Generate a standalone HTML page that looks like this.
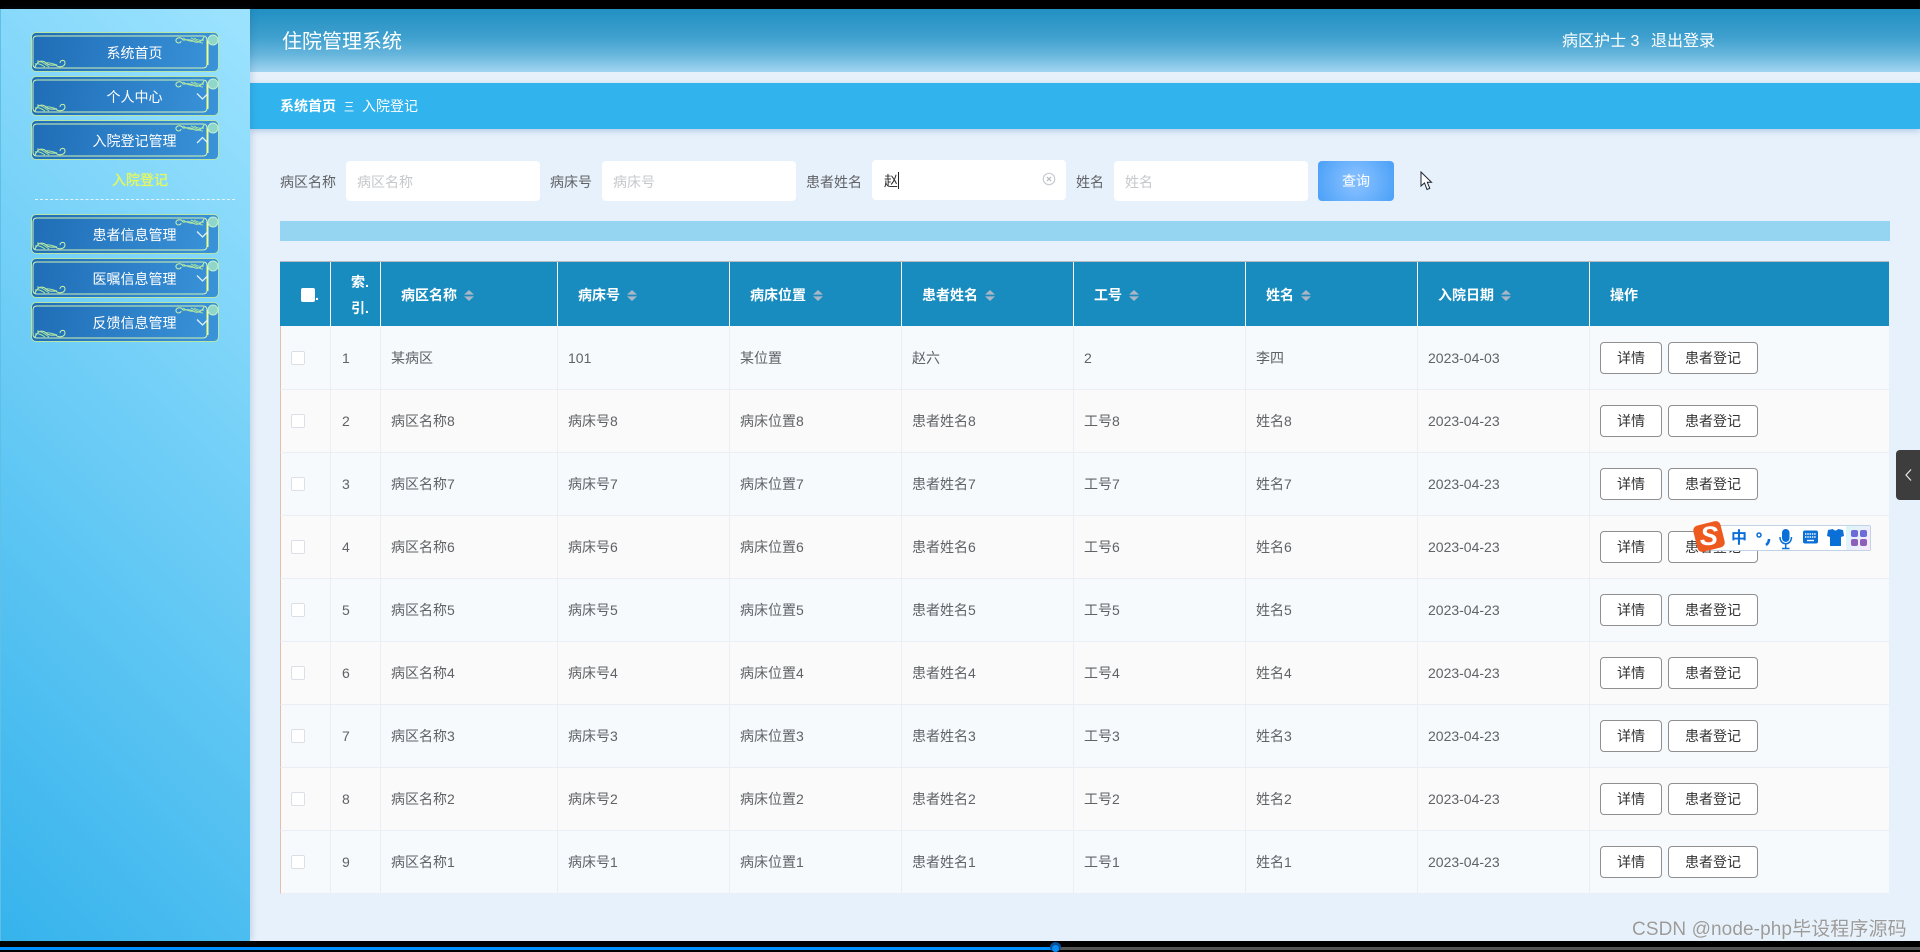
<!DOCTYPE html>
<html lang="zh-CN"><head><meta charset="utf-8"><title>住院管理系统</title>
<style>
*{box-sizing:border-box;margin:0;padding:0}
html,body{width:1920px;height:950px;overflow:hidden;background:#000;font-family:"Liberation Sans","Noto Sans CJK SC",sans-serif;font-size:14px}
.a{position:absolute}
#main{left:250px;top:9px;width:1670px;height:932px;background:#e7f1fb}
#side{left:0;top:9px;width:250px;height:932px;background:linear-gradient(225deg,#9de3ff,#36b3ec);box-shadow:2px 0 6px rgba(40,80,130,.18);border-left:1px solid #5fbfe6}
.nb{position:absolute;left:31px;width:188px;height:40px;border:1px solid #b5e6a8;border-radius:5px;background:linear-gradient(100deg,#1f6db6,#3a93d9)}
.nb svg{position:absolute;left:-1px;top:-1px}
.nb span{position:absolute;left:-1px;width:207px;text-align:center;top:10px;line-height:20px;color:#fff;font-size:14px}
#hd{left:250px;top:9px;width:1670px;height:63px;background:linear-gradient(#2190c3 0,#3fa0ce 45%,#66b5dc 72%,#a2d5f0 100%)}
#crumb{left:250px;top:83px;width:1670px;height:46px;background:#31b3ed;box-shadow:0 2px 6px rgba(60,110,180,.3)}
.lb{position:absolute;top:172px;line-height:20px;color:#606266}
.ip{position:absolute;width:194px;height:40px;background:#fff;border-radius:4px;padding-left:11px;padding-top:1px;line-height:40px;color:#c6c8cc}
#tw{left:280px;top:261px;width:1609px}
table{border-collapse:separate;border-spacing:0;table-layout:fixed;width:1609px;border-top:1px solid #b8bcc2}
th{height:64px;background:#188cbf;color:#fff;text-align:left;font-weight:700;padding:1px 0 0 20px;border-left:1px solid #fff;font-size:14px;line-height:26px;vertical-align:middle}
th:first-child{border-left:0;padding-left:21px}
td{height:63px;padding:0 0 0 10px;color:#606266;border-left:1px solid #ebeef5;border-bottom:1px solid #ebeef5;font-size:14px;vertical-align:middle}
tbody tr:first-child td{height:64px;padding-top:1px}
td:first-child{border-left:1px solid #e9bcae}
tr.o td{background:#f6fafd}
tr.e td{background:#fafafa}
.ck{display:block;width:14px;height:14px;border:1px solid #dcdfe6;border-radius:2px;background:#fff}
.car{display:inline-block;vertical-align:-1px;margin-left:7px}
.b{display:inline-block;height:32px;line-height:30px;border:1px solid #8f8f8f;border-radius:4px;background:#fff;color:#333;text-align:center;vertical-align:middle}
.b1{width:62px;margin-right:6px}.b2{width:90px}
.n td:nth-child(2){padding-left:11px}
</style></head><body>
<svg width="0" height="0" style="position:absolute"><defs>
<symbol id="ca" viewBox="0 0 10 11"><path d="M5 0L10 4.6H0Z M5 11L0 6.4H10Z" fill="#aab6c6"/></symbol>
<symbol id="fr" viewBox="0 0 188 40">
<path d="M6 4H172Q176 4 176 8V32Q176 36 172 36H6Q2 36 2 32V8Q2 4 6 4Z" fill="none" stroke="#d4f3b0" stroke-width="1"/>
<path d="M176.500 8V33" stroke="#f0ff8c" stroke-width="2" fill="none"/>
<path d="M4 35C7 28 12 28 15 31C18 34 22 33 25 33C27 36 34 35 34 31C34 27 29 28 29 31" fill="none" stroke="#c9f2a6" stroke-width="1"/>
<path d="M4 32C8 31 11 33 14 35M6 29C10 29 14 32 18 35M14 31C18 30 22 32 26 33" fill="none" stroke="#a9e59d" stroke-width="1"/>
<path d="M173 5C170 11 165 11 162 9C159 7 155 8 152 8C150 4 144 6 145 9C146 12 150 11 150 9" fill="none" stroke="#c9f2a6" stroke-width="1"/>
<path d="M173 8C169 9 166 8 163 6M172 11C168 11 164 8 160 6M163 9C159 10 155 8 152 6" fill="none" stroke="#a9e59d" stroke-width="1"/>
<circle cx="182" cy="8" r="5" fill="#8fd7c9" stroke="#c4ecd0" stroke-width="1"/>
</symbol></defs></svg>

<div class="a" id="main"></div>
<div class="a" id="hd">
<div class="a" style="left:32px;top:18px;font-size:20px;line-height:30px;color:#fff">住院管理系统</div>
<div class="a" style="left:1312px;top:21px;font-size:16px;line-height:24px;color:#fff;white-space:pre">病区护士 3</div>
<div class="a" style="left:1401px;top:21px;font-size:16px;line-height:24px;color:#fff">退出登录</div>
</div>
<div class="a" id="crumb">
<div class="a" style="left:30px;top:13px;line-height:20px;color:#fff;font-weight:700;white-space:nowrap">系统首页</div>
<div class="a" style="left:94px;top:14px;line-height:20px;color:#fff;font-size:12px;transform:scaleX(.85);transform-origin:0 50%">三</div>
<div class="a" style="left:112px;top:13px;line-height:20px;color:#fff;white-space:nowrap">入院登记</div>
</div>

<div class="a" id="side"></div>
<div class="nb" style="top:32px"><svg width="188" height="40"><use href="#fr"/></svg><span>系统首页</span></div>
<div class="nb" style="top:76px"><svg width="188" height="40"><use href="#fr"/><path d="M166 17.500L171.500 23L177 17.500" fill="none" stroke="#dff0ff" stroke-width="1.300"/></svg><span>个人中心</span></div>
<div class="nb" style="top:120px"><svg width="188" height="40"><use href="#fr"/><path d="M166 23L171.500 17.500L177 23" fill="none" stroke="#dff0ff" stroke-width="1.300"/></svg><span>入院登记管理</span></div>
<div class="a" style="left:112px;top:170px;line-height:20px;color:#e6f95a;font-size:14px;text-shadow:0 0 1px #e6f95a">入院登记</div>
<div class="a" style="left:35px;top:199px;width:200px;border-top:1px dashed #e6f6ff"></div>
<div class="nb" style="top:214px"><svg width="188" height="40"><use href="#fr"/><path d="M166 17.500L171.500 23L177 17.500" fill="none" stroke="#dff0ff" stroke-width="1.300"/></svg><span>患者信息管理</span></div>
<div class="nb" style="top:258px"><svg width="188" height="40"><use href="#fr"/><path d="M166 17.500L171.500 23L177 17.500" fill="none" stroke="#dff0ff" stroke-width="1.300"/></svg><span>医嘱信息管理</span></div>
<div class="nb" style="top:302px"><svg width="188" height="40"><use href="#fr"/><path d="M166 17.500L171.500 23L177 17.500" fill="none" stroke="#dff0ff" stroke-width="1.300"/></svg><span>反馈信息管理</span></div>

<div class="lb" style="left:280px">病区名称</div>
<div class="ip" style="left:346px;top:161px">病区名称</div>
<div class="lb" style="left:550px">病床号</div>
<div class="ip" style="left:602px;top:161px">病床号</div>
<div class="lb" style="left:806px">患者姓名</div>
<div class="ip" style="left:872px;top:160px;color:#333;padding-left:12px">赵</div>
<div class="a" style="left:898px;top:172px;width:1px;height:17px;background:#222"></div>
<svg class="a" style="left:1042px;top:172px" width="14" height="14"><circle cx="7" cy="7" r="5.700" fill="none" stroke="#c9ccd4" stroke-width="1.200"/><path d="M5 5L9 9M9 5L5 9" stroke="#b4b8c2" stroke-width="1.200"/></svg>
<div class="lb" style="left:1076px">姓名</div>
<div class="ip" style="left:1114px;top:161px">姓名</div>
<div class="a" style="left:1318px;top:161px;width:76px;height:40px;border-radius:4px;background:radial-gradient(circle,#7fbcff 20%,#4aa0f7 100%);color:#fff;text-align:center;line-height:40px">查询</div>
<svg class="a" style="left:1420px;top:171px" width="13" height="20"><path d="M1 1V15L4.500 12L7 18.500L9.800 17.300L7.300 11.300H11.500Z" fill="#fff" stroke="#1c2230" stroke-width="1"/></svg>

<div class="a" style="left:280px;top:221px;width:1610px;height:20px;background:#95d5f2"></div>

<div class="a" id="tw"><table>
<colgroup><col style="width:50px"><col style="width:50px"><col style="width:177px"><col style="width:172px"><col style="width:172px"><col style="width:172px"><col style="width:172px"><col style="width:172px"><col style="width:172px"><col style="width:300px"></colgroup>
<thead><tr>
<th><span style="display:inline-block;width:14px;height:14px;background:#fff;border-radius:2px;vertical-align:-2px"></span>.</th>
<th style="padding-left:20px">索.<br>引.</th>
<th>病区名称<svg class="car" width="10" height="11"><use href="#ca"/></svg></th>
<th>病床号<svg class="car" width="10" height="11"><use href="#ca"/></svg></th>
<th>病床位置<svg class="car" width="10" height="11"><use href="#ca"/></svg></th>
<th>患者姓名<svg class="car" width="10" height="11"><use href="#ca"/></svg></th>
<th>工号<svg class="car" width="10" height="11"><use href="#ca"/></svg></th>
<th>姓名<svg class="car" width="10" height="11"><use href="#ca"/></svg></th>
<th>入院日期<svg class="car" width="10" height="11"><use href="#ca"/></svg></th>
<th>操作</th>
</tr></thead><tbody class="n">
<tr class="o"><td><i class="ck"></i></td><td>1</td><td>某病区</td><td>101</td><td>某位置</td><td>赵六</td><td>2</td><td>李四</td><td>2023-04-03</td><td><span class="b b1">详情</span><span class="b b2">患者登记</span></td></tr>
<tr class="e"><td><i class="ck"></i></td><td>2</td><td>病区名称8</td><td>病床号8</td><td>病床位置8</td><td>患者姓名8</td><td>工号8</td><td>姓名8</td><td>2023-04-23</td><td><span class="b b1">详情</span><span class="b b2">患者登记</span></td></tr>
<tr class="o"><td><i class="ck"></i></td><td>3</td><td>病区名称7</td><td>病床号7</td><td>病床位置7</td><td>患者姓名7</td><td>工号7</td><td>姓名7</td><td>2023-04-23</td><td><span class="b b1">详情</span><span class="b b2">患者登记</span></td></tr>
<tr class="e"><td><i class="ck"></i></td><td>4</td><td>病区名称6</td><td>病床号6</td><td>病床位置6</td><td>患者姓名6</td><td>工号6</td><td>姓名6</td><td>2023-04-23</td><td><span class="b b1">详情</span><span class="b b2">患者登记</span></td></tr>
<tr class="o"><td><i class="ck"></i></td><td>5</td><td>病区名称5</td><td>病床号5</td><td>病床位置5</td><td>患者姓名5</td><td>工号5</td><td>姓名5</td><td>2023-04-23</td><td><span class="b b1">详情</span><span class="b b2">患者登记</span></td></tr>
<tr class="e"><td><i class="ck"></i></td><td>6</td><td>病区名称4</td><td>病床号4</td><td>病床位置4</td><td>患者姓名4</td><td>工号4</td><td>姓名4</td><td>2023-04-23</td><td><span class="b b1">详情</span><span class="b b2">患者登记</span></td></tr>
<tr class="o"><td><i class="ck"></i></td><td>7</td><td>病区名称3</td><td>病床号3</td><td>病床位置3</td><td>患者姓名3</td><td>工号3</td><td>姓名3</td><td>2023-04-23</td><td><span class="b b1">详情</span><span class="b b2">患者登记</span></td></tr>
<tr class="e"><td><i class="ck"></i></td><td>8</td><td>病区名称2</td><td>病床号2</td><td>病床位置2</td><td>患者姓名2</td><td>工号2</td><td>姓名2</td><td>2023-04-23</td><td><span class="b b1">详情</span><span class="b b2">患者登记</span></td></tr>
<tr class="o"><td><i class="ck"></i></td><td>9</td><td>病区名称1</td><td>病床号1</td><td>病床位置1</td><td>患者姓名1</td><td>工号1</td><td>姓名1</td><td>2023-04-23</td><td><span class="b b1">详情</span><span class="b b2">患者登记</span></td></tr>
</tbody></table></div>

<div class="a" style="left:1896px;top:450px;width:24px;height:50px;background:#3d3d3d;border-radius:4px 0 0 4px"></div>
<svg class="a" style="left:1904px;top:468px" width="10" height="14"><path d="M7 1.500L2 7L7 12.500" fill="none" stroke="#e8e8e8" stroke-width="1.200"/></svg>

<div class="a" style="left:1710px;top:525px;width:161px;height:26px;background:#fff;border:1px solid #c2d3e6;border-radius:2px"></div>
<div class="a" style="left:1846px;top:526px;width:24px;height:24px;background:linear-gradient(120deg,#d8f6fb,#fbeafb)"></div>
<div class="a" style="left:1695px;top:523px;width:28px;height:27px;background:#ee5a1e;border-radius:5px;transform:rotate(-14deg)"></div>
<div class="a" style="left:1695px;top:520px;width:28px;height:32px;line-height:32px;text-align:center;color:#fff;font-size:27px;font-weight:700;font-style:italic">S</div>
<div class="a" style="left:1731px;top:528px;font-size:16px;line-height:22px;font-weight:700;color:#0a6fd6">中</div>
<svg class="a" style="left:1754px;top:527px" width="118" height="24">
<circle cx="5" cy="8" r="2" fill="none" stroke="#0a6fd6" stroke-width="1.500"/>
<path d="M15 12C15 15 13.500 17 12 18" stroke="#0a6fd6" stroke-width="2.600" fill="none"/>
<rect x="28" y="2" width="7.500" height="13" rx="3.700" fill="#0a6fd6"/>
<path d="M26 10C26 19 37.500 19 37.500 10M31.700 17V21M28 21.500H35.500" fill="none" stroke="#0a6fd6" stroke-width="1.500"/>
<rect x="49" y="3.500" width="15" height="13" rx="2" fill="#0a6fd6"/>
<path d="M51 7H62M51 10H62" stroke="#fff" stroke-width="1.400" stroke-dasharray="1.400 .9"/>
<path d="M53 13.500H60" stroke="#fff" stroke-width="1.400"/>
<path d="M74 3L79 2C80 4 83 4 84 2L89 3L90 9L87 10V19H76V10L73 9Z" fill="#0a6fd6"/>
<rect x="97" y="3" width="7" height="7" rx="2" fill="#6d6bd8"/><rect x="106" y="3" width="7" height="7" rx="2" fill="#6d6bd8"/>
<rect x="97" y="12" width="7" height="7" rx="2" fill="#8d5fb8"/><rect x="106" y="12" width="7" height="7" rx="2" fill="#8d5fb8"/>
</svg>

<div class="a" style="left:1632px;top:918px;width:285px;line-height:24px;font-size:19px;letter-spacing:.1px;color:#9b9b9b;white-space:nowrap;text-shadow:0 0 1px #fff">CSDN @node-php毕设程序源码</div>
<div class="a" style="left:0;top:947px;width:1055px;height:3px;background:#0091ff"></div>
<div class="a" style="left:1055px;top:947px;width:865px;height:3px;background:#555"></div>
<div class="a" style="left:1050px;top:942px;width:11px;height:10px;border-radius:50%;background:#0c4f9a"></div>
<div class="a" style="left:1052px;top:945px;width:7px;height:7px;border-radius:50%;background:#0a8cf0"></div>
</body></html>
